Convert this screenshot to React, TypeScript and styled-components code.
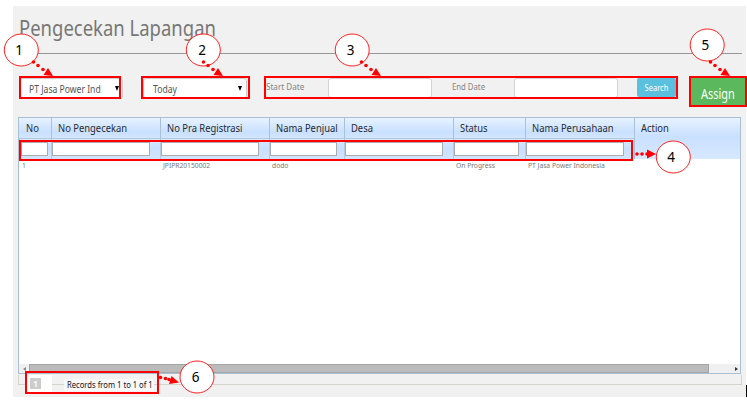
import React from "react";
import styled, { createGlobalStyle } from "styled-components";

const Global = createGlobalStyle`
  *, *::before, *::after { box-sizing: border-box; }
  body { margin: 0; background: #fff; overflow: hidden; font-family: "Noto Sans", sans-serif; }
`;

const Page = styled.div`
  position: relative;
  width: 747px;
  height: 402px;
  padding: 6px 1px 5px 13px;
  background: #fff;
`;

const Panel = styled.main`
  height: 391px;
  padding: 0 4px 0 5px;
  background: #f1f1f1;
`;

const Narrow = styled.span<{ $x: number; $center?: boolean }>`
  display: inline-block;
  transform: scaleX(${(p) => p.$x});
  transform-origin: ${(p) => (p.$center ? "center" : "left")};
  white-space: nowrap;
`;

const Title = styled.h1`
  height: 48px;
  margin: 0 0 0 1px;
  padding: 7px 0 0;
  border-bottom: 1px solid #979797;
  color: #777;
  font-size: 21px;
  line-height: 30px;
  font-weight: 400;
`;

const Toolbar = styled.div`
  display: flex;
  height: 63px;
  padding-top: 22px;
  margin-right: -6px;
`;

const Marked = styled.div<{ $w: number; $ml: number; $h?: number }>`
  position: relative;
  display: flex;
  flex: none;
  width: ${(p) => p.$w}px;
  height: ${(p) => p.$h ?? 23}px;
  margin-left: ${(p) => p.$ml}px;
  padding: 2px;
  &::after {
    content: "";
    position: absolute;
    inset: 0;
    border: 2px solid #f00;
  }
`;

const Select = styled.div<{ $ml: number; $caret: number; $w: number }>`
  display: flex;
  align-items: center;
  justify-content: space-between;
  flex: none;
  width: ${(p) => p.$w}px;
  height: 21px;
  margin-left: ${(p) => p.$ml}px;
  padding: 0 ${(p) => p.$caret}px 0 9px;
  border: 1px solid #ccc;
  border-radius: 3px;
  background: #fff;
  color: #555;
  font-size: 10px;
  line-height: 18px;
`;

const Caret = styled.i`
  flex: none;
  margin-left: -12px;
  border: 2.5px solid transparent;
  border-top: 5px solid #000;
  border-bottom: 0;
`;

const DateLabel = styled.label`
  width: 62px;
  color: #858585;
  font-size: 9px;
  line-height: 18px;
`;

const DateInput = styled.div<{ $mr: number }>`
  width: 104px;
  height: 20px;
  margin-right: ${(p) => p.$mr}px;
  border: 1px solid #d2d2d2;
  border-radius: 3px;
  background: #fff;
`;

const SearchButton = styled.button`
  width: 39px;
  height: 19px;
  padding: 0;
  border: 0;
  border-radius: 2px;
  background: #5bbfde;
  color: #fff;
  font: 8.5px/16px "Noto Sans", sans-serif;
`;

const AssignButton = styled.button`
  flex: 1;
  padding: 4px 0 0;
  border: 0;
  background: #5cb85c;
  color: #fff;
  font: 13.5px/20px "Noto Sans", sans-serif;
`;

const columns = "32px 109px 109px 75px 109px 72px 109px 1fr";

const Grid = styled.section`
  display: flex;
  flex-direction: column;
  width: 723px;
  height: 257px;
  border: 1px solid #a9bfd3;
  background: #fff;
`;

const HeaderRow = styled.div`
  position: relative;
  display: grid;
  grid-template-columns: ${columns};
  grid-template-rows: 21px 20px;
  height: 41px;
`;

const HeaderCell = styled.div<{ $last?: boolean }>`
  grid-row: ${(p) => (p.$last ? "span 2" : "auto")};
  padding-left: 6px;
  border-left: 1px solid #a9c1d7;
  border-bottom: ${(p) => (p.$last ? 0 : 1)}px solid #b1c8dd;
  background: ${(p) => (p.$last
    ? "linear-gradient(#e7f2ff, #c9e0ff 45%, #d8e8ff)"
    : "linear-gradient(#e7f2ff, #c9e0ff 70%, #d3e5ff)")};
  color: #252b32;
  font-size: 10px;
  line-height: 21px;
  &:first-child { border-left: 0; padding-left: 7px; }
`;

const FilterCell = styled.div`
  display: flex;
  padding-top: 3px;
  border-left: 1px solid #b5cbe2;
  background: linear-gradient(#d8e8ff, #c9dfff 50%, #d3e5ff);
`;

const FilterInput = styled.div<{ $w: number; $ml: number }>`
  width: ${(p) => p.$w}px;
  height: 14px;
  margin-left: ${(p) => p.$ml}px;
  border: 1px solid #a9adb3;
  background: #fff;
`;

const FilterOutline = styled.div`
  position: absolute;
  left: 0;
  top: 22px;
  width: 614px;
  height: 21px;
  border: 2px solid #f00;
`;

const DataRow = styled.div`
  display: grid;
  grid-template-columns: ${columns};
  flex: 1;
  padding-top: 2px;
  color: #777;
  font-size: 7px;
  line-height: 10px;
`;

const DataCell = styled.div`
  padding-left: 3px;
`;

const Scrollbar = styled.div`
  display: flex;
  align-items: center;
  height: 9px;
  background: #f0f0f0;
`;

const Thumb = styled.div`
  flex: none;
  width: 680px;
  height: 9px;
  margin: 0 26px 0 3px;
  border: 1px solid #a5a5a5;
  background: #bbb;
`;

const ScrollArrow = styled.i<{ $right?: boolean }>`
  margin-left: ${(p) => (p.$right ? 0 : 4)}px;
  border: 2px solid transparent;
  ${(p) => p.$right ? "border-left: 3px solid #333; border-right: 0;" : "border-right: 3px solid #888; border-left: 0;"}
`;

const Pager = styled.footer`
  width: 724px;
  height: 10px;
  margin-top: 1px;
  border: 1px solid #d4d4ca;
  border-top: 0;
`;

const PagerBox = styled.div`
  position: relative;
  display: flex;
  top: -4px;
  width: 134px;
  height: 23px;
  margin-left: 6px;
  border: 2px solid #f00;
`;

const PageList = styled.div`
  width: 25px;
  height: 17px;
  margin-top: 2px;
  padding: 3px;
  background: #fff;
`;

const PageNumber = styled.span`
  display: block;
  width: 11px;
  height: 11px;
  background: #ccc;
  color: #fff;
  font: 700 8px/11px "Noto Sans", sans-serif;
  text-align: center;
`;

const Records = styled.div`
  width: 90px;
  height: 12px;
  margin: 6px 0 0 12px;
  padding-left: 3px;
  background: #f8f8f8;
  color: #15151f;
  font-size: 8.3px;
  line-height: 12px;
`;

const TextCursor = styled.i`
  position: absolute;
  left: 746px;
  top: 385px;
  width: 1px;
  height: 12px;
  background: #000;
`;

const Callouts = styled.svg`
  position: absolute;
  inset: 0;
  pointer-events: none;
`;

const CalloutNumber = styled.text`
  fill: #000;
  font: 13.5px "Noto Sans", sans-serif;
  text-anchor: middle;
`;

type Callout = { n: number; x: number; y: number; tx: number; dots: number[][]; head: string };

const callouts: Callout[] = [
  { n: 1, x: 21.3, y: 50, tx: 19, dots: [[33.5, 62], [38, 65.5], [43, 69.5]], head: "53,76 43.5,75 48,68" },
  { n: 2, x: 203.3, y: 50, tx: 202, dots: [[203.5, 62], [208, 65.5], [213, 69.5]], head: "223,76 213.5,75 218,68" },
  { n: 3, x: 352.2, y: 50, tx: 350.5, dots: [[361.5, 62], [366, 65.5], [371, 69.5]], head: "381,76 371.5,75 376,68" },
  { n: 4, x: 673.3, y: 157, tx: 671, dots: [[637, 154], [642, 154], [647, 154]], head: "656,154 647,149.5 647,158.5" },
  { n: 5, x: 707.2, y: 45, tx: 705.3, dots: [[710.5, 62], [715, 65.5], [720, 69.5]], head: "730,76 720.5,75 725,68" },
  { n: 6, x: 197, y: 377, tx: 195.5, dots: [[160.5, 377.5], [165.5, 378.5], [169, 379.5]], head: "179,382.5 169,384 171.5,376" },
];

const headers = ["No", "No Pengecekan", "No Pra Registrasi", "Nama Penjual", "Desa", "Status", "Nama Perusahaan", "Action"];
const filters = [27, 98, 98, 67, 98, 65, 98];
const record = ["1", "", "JPIPR20150002", "dodo", "", "On Progress", "PT Jasa Power Indonesia", ""];

export default function App() {
  return (
    <Page>
      <Global />
      <Panel>
        <Title><Narrow $x={0.88}>Pengecekan Lapangan</Narrow></Title>
        <Toolbar>
          <Marked $w={102} $ml={1}>
            <Select $ml={-2} $w={104} $caret={3}><Narrow $x={0.86}>PT Jasa Power Ind</Narrow><Caret /></Select>
          </Marked>
          <Marked $w={109} $ml={20}>
            <Select $ml={0} $w={104} $caret={4}><Narrow $x={0.86}>Today</Narrow><Caret /></Select>
          </Marked>
          <Marked $w={414} $ml={14}>
            <DateLabel><Narrow $x={0.9}>Start Date</Narrow></DateLabel>
            <DateInput $mr={20} />
            <DateLabel><Narrow $x={0.86}>End Date</Narrow></DateLabel>
            <DateInput $mr={19} />
            <SearchButton><Narrow $x={0.88} $center>Search</Narrow></SearchButton>
          </Marked>
          <Marked $w={58} $ml={11} $h={31}>
            <AssignButton><Narrow $x={0.81} $center>Assign</Narrow></AssignButton>
          </Marked>
        </Toolbar>
        <Grid>
          <HeaderRow>
            {headers.map((name, i) => (
              <HeaderCell key={name} $last={i === 7}><Narrow $x={0.94}>{name}</Narrow></HeaderCell>
            ))}
            {filters.map((width, i) => (
              <FilterCell key={i}><FilterInput $w={width} $ml={i ? 0 : 1} /></FilterCell>
            ))}
            <FilterOutline />
          </HeaderRow>
          <DataRow>
            {record.map((value, i) => <DataCell key={i}><Narrow $x={0.96}>{value}</Narrow></DataCell>)}
          </DataRow>
          <Scrollbar><ScrollArrow /><Thumb /><ScrollArrow $right /></Scrollbar>
        </Grid>
        <Pager>
          <PagerBox>
            <PageList><PageNumber>1</PageNumber></PageList>
            <Records><Narrow $x={0.92}>Records from 1 to 1 of 1</Narrow></Records>
          </PagerBox>
        </Pager>
      </Panel>
      <TextCursor />
      <Callouts width="747" height="402" viewBox="0 0 747 402">
        {callouts.map((c) => (
          <g key={c.n}>
            <ellipse cx={c.x} cy={c.y} rx="17" ry="16" fill="#fff" stroke="#f22" strokeWidth="1" />
            <CalloutNumber x={c.tx} y={c.y + 5.3}>{c.n}</CalloutNumber>
            {c.dots.map(([x, y]) => <circle key={x} cx={x} cy={y} r="1.8" fill="#f00" />)}
            <polygon points={c.head} fill="#f00" />
          </g>
        ))}
      </Callouts>
    </Page>
  );
}
